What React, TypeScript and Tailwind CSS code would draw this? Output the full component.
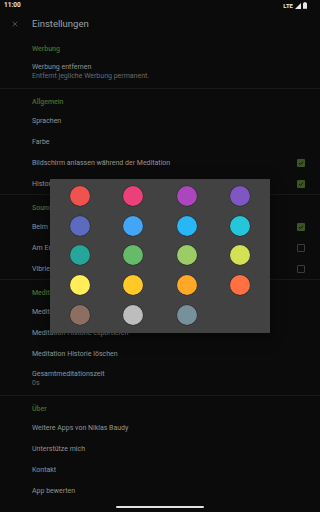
import { X } from "lucide-react";

type Row = {
  title: string;
  summary?: string;
  check?: boolean;
};

type Section = {
  header: string;
  rows: Row[];
};

const sections: Section[] = [
  {
    header: "Werbung",
    rows: [{ title: "Werbung entfernen", summary: "Entfernt jegliche Werbung permanent." }],
  },
  {
    header: "Allgemein",
    rows: [
      { title: "Sprachen" },
      { title: "Farbe" },
      { title: "Bildschirm anlassen während der Meditation", check: true },
      { title: "Historie speichern", check: true },
    ],
  },
  {
    header: "Sounds",
    rows: [
      { title: "Beim Start Sound abspielen", check: true },
      { title: "Am Ende Sound abspielen", check: false },
      { title: "Vibrieren", check: false },
    ],
  },
  {
    header: "Meditation",
    rows: [
      { title: "Meditation Historie importieren" },
      { title: "Meditation Historie exportieren" },
      { title: "Meditation Historie löschen" },
      { title: "Gesamtmeditationszeit", summary: "0s" },
    ],
  },
  {
    header: "Über",
    rows: [
      { title: "Weitere Apps von Niklas Baudy" },
      { title: "Unterstütze mich" },
      { title: "Kontakt" },
      { title: "App bewerten" },
    ],
  },
];

const colors = [
  "bg-[#ef5350]",
  "bg-[#ec407a]",
  "bg-[#ab47bc]",
  "bg-[#7e57c2]",
  "bg-[#5c6bc0]",
  "bg-[#42a5f5]",
  "bg-[#29b6f6]",
  "bg-[#26c6da]",
  "bg-[#26a69a]",
  "bg-[#66bb6a]",
  "bg-[#9ccc65]",
  "bg-[#d4e157]",
  "bg-[#ffee58]",
  "bg-[#ffca28]",
  "bg-[#ffa726]",
  "bg-[#ff7043]",
  "bg-[#8d6e63]",
  "bg-[#bdbdbd]",
  "bg-[#78909c]",
];

function Checkbox({ on }: { on: boolean }) {
  if (on) {
    return (
      <span className="flex h-[8px] w-[8px] items-center justify-center rounded-[1px] bg-[#3d5426]">
        <svg width="6" height="6" viewBox="0 0 12 12" aria-hidden="true">
          <path d="M2 6.5l2.6 2.5L10 3.5" fill="none" stroke="#0d1208" strokeWidth="2" />
        </svg>
      </span>
    );
  }
  return <span className="h-[8px] w-[8px] rounded-[1px] border border-[#3c3c3c]" />;
}

function StatusBar() {
  return (
    <div className="flex h-[11px] items-center justify-between pl-[4px] pr-[13px] text-[#e6e6e6]">
      <span className="text-[6.5px] font-bold leading-none">11:00</span>
      <div className="flex items-center gap-[2px]">
        <span className="text-[6px] font-bold leading-none">LTE</span>
        <svg width="6" height="6" viewBox="0 0 10 10" aria-hidden="true">
          <path d="M10 0v10H0z" fill="#e6e6e6" />
        </svg>
        <svg width="4" height="7" viewBox="0 0 6 10" aria-hidden="true">
          <rect x="1.5" y="0" width="3" height="1" fill="#e6e6e6" />
          <rect x="0" y="1" width="6" height="9" rx="0.6" fill="#e6e6e6" />
        </svg>
      </div>
    </div>
  );
}

function SettingRow({ row }: { row: Row }) {
  if (row.summary) {
    return (
      <div className="flex h-[31px] flex-col pl-[32px] pt-[5px]">
        <span className="text-[7px] leading-[10px] text-[#939393]">{row.title}</span>
        <span className="text-[7px] leading-[9px] text-[#6a6a6a]">{row.summary}</span>
      </div>
    );
  }
  return (
    <div className="flex h-[21px] items-center justify-between pl-[32px] pr-[15px]">
      <span className="text-[7px] leading-[10px] text-[#939393]">{row.title}</span>
      {row.check !== undefined && <Checkbox on={row.check} />}
    </div>
  );
}

function ColorDialog() {
  return (
    <div className="absolute left-[50px] top-[179px] w-[220px] bg-[#424242] px-[20px] pb-[8px] pt-[7px] shadow-[0_4px_12px_rgba(0,0,0,0.5)]">
      <div className="grid grid-cols-[repeat(4,20px)] justify-between gap-y-[9.7px]">
        {colors.map((c) => (
          <span key={c} className={`h-[20px] w-[20px] rounded-full ${c} ring-[0.5px] ring-black/40`} />
        ))}
      </div>
    </div>
  );
}

export default function App() {
  return (
    <div
      className="relative h-[512px] w-[320px] overflow-hidden bg-[#0b0b0b]"
      style={{ fontFamily: "Roboto, 'Noto Sans', sans-serif" }}
    >
      <StatusBar />
      <div className="flex h-[25px] items-center">
        <div className="flex w-[29px] justify-center">
          <X size={8} strokeWidth={1.6} color="#8a8a8a" />
        </div>
        <span className="pl-[3px] text-[9.5px] leading-none text-[#a0a0a0]">Einstellungen</span>
      </div>
      {sections.map((section, i) => (
        <div key={section.header} className={i > 0 ? "border-t border-[#181818]" : ""}>
          <div className="h-[21px] pl-[32px] pt-[8px]">
            <span className="block text-[7px] font-medium leading-[10px] text-[#4d6b2c]">
              {section.header}
            </span>
          </div>
          {section.rows.map((row) => (
            <SettingRow key={row.title} row={row} />
          ))}
        </div>
      ))}
      <div className="absolute bottom-[4px] left-[116px] h-[2px] w-[88px] rounded-full bg-[#e2e2e2]" />
      <ColorDialog />
    </div>
  );
}
